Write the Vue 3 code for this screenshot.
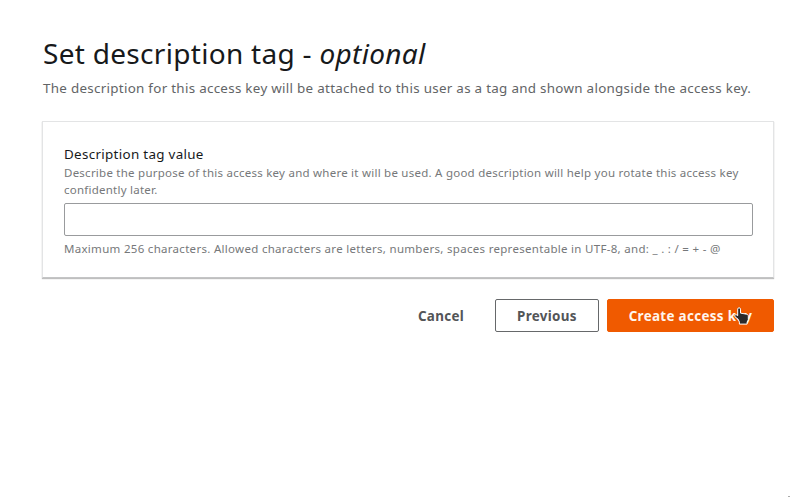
<script setup>
import { ref } from 'vue'
const description = ref('')
</script>

<template>
  <main class="page">
    <h1 class="title">Set description tag - <i>optional</i></h1>
    <p class="intro">The description for this access key will be attached to this user as a tag and shown alongside the access key.</p>
    <section class="card">
      <label class="label" for="tag">Description tag value</label>
      <p class="help">Describe the purpose of this access key and where it will be used. A good description will help you rotate this access key<br>confidently later.</p>
      <input id="tag" v-model="description" class="field" type="text">
      <p class="help constraint">Maximum 256 characters. Allowed characters are letters, numbers, spaces representable in UTF-8, and: _ . : / = + - @</p>
    </section>
    <footer class="actions">
      <button class="btn link">Cancel</button>
      <button class="btn normal">Previous</button>
      <button class="btn primary">Create access key
        <svg class="cursor" viewBox="0 0 15 18" width="15" height="18">
          <path d="M4.2 12.3 1 9.8C.1 8.5 1.2 7.1 2.6 7.9L3.7 8.7V2.1C3.7.3 6.5.3 6.5 2.1v4l6.1 1.1c1.1.2 1.7.8 1.7 1.9v3.7l-1.2 2.3v2H5.4v-2z" fill="#2b2a2a" stroke="#fff" stroke-width="1" />
        </svg>
      </button>
    </footer>
    <span class="dot"></span>
  </main>
</template>

<style>
body { background: #fff; }
</style>
<style scoped>
.page { position: relative; box-sizing: border-box; width: 790px; height: 497px; padding: 33px 16px 0 42px; font-family: "Noto Sans", sans-serif; color: #17191b; overflow: hidden; }
.title { margin: 0 0 0 1px; font-size: 28px; line-height: 40px; font-weight: 400; letter-spacing: .3px; white-space: pre; }
.intro { margin: 4px 0 0 1px; font-size: 13.4px; line-height: 22px; letter-spacing: .288px; color: #626466; white-space: nowrap; }
.card { box-sizing: border-box; height: 157px; margin-top: 22px; padding: 21px 21px 0 21px; border: 1px solid #e3e4e5; border-bottom-color: #c4c5c6; box-shadow: 0 1px 1px rgba(0, 0, 0, .25); }
.label { display: block; font-size: 13.4px; line-height: 22px; letter-spacing: .31px; }
.help { margin: 0; font-size: 11.5px; line-height: 16.5px; letter-spacing: .243px; color: #76787a; white-space: nowrap; }
.constraint { padding-top: 1px; letter-spacing: .297px; }
.field { box-sizing: border-box; display: block; width: 689px; height: 33px; margin: 5px 0 4px; border: 1px solid #999b9d; border-radius: 2px; outline: none; }
.actions { display: flex; justify-content: flex-end; margin-top: 21px; }
.btn { position: relative; box-sizing: border-box; height: 33px; padding: 0; border: 1px solid #66686a; border-radius: 2px; background: #fff; font: 700 13.4px/22px "Noto Sans", sans-serif; letter-spacing: .33px; color: #535557; white-space: nowrap; }
.link { width: 90px; border-color: transparent; margin-right: 9px; }
.normal { width: 104px; margin-right: 8px; }
.primary { width: 167px; background: #f05a00; border-color: #f05a00; color: #fff5ed; }
.cursor { position: absolute; left: 126px; top: 7px; }
.dot { position: absolute; right: 0; bottom: 0; width: 2px; height: 1px; background: #aaa; }
</style>
